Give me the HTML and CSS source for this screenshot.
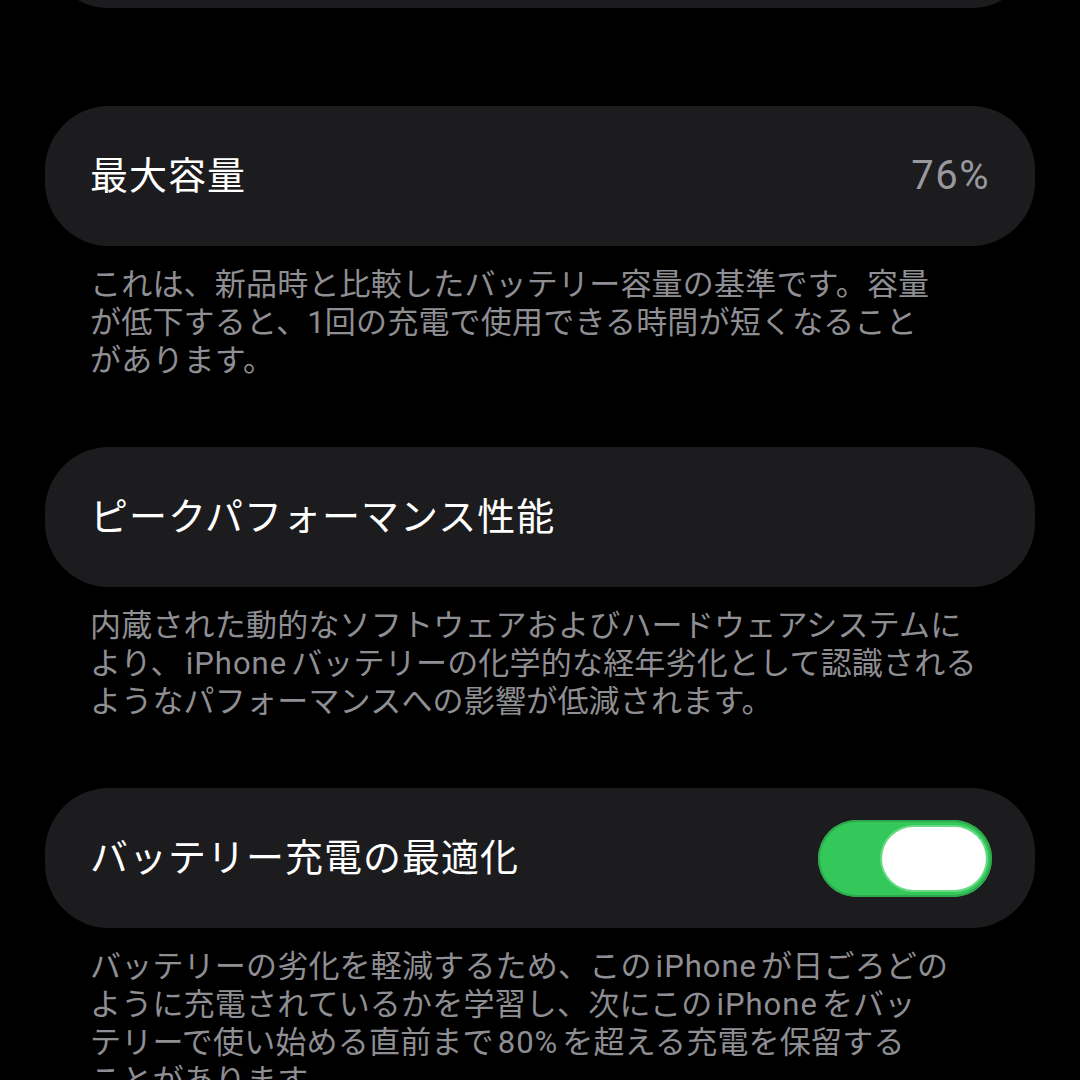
FILE: index.html
```html
<!DOCTYPE html>
<html lang="ja">
<head>
<meta charset="utf-8">
<title>バッテリーの状態</title>
<link rel="stylesheet" href="styles.css">
</head>
<body>
<main class="screen">
  <section class="card card-top"></section>

  <section class="card">
    <span class="label">最大容量</span>
    <span class="value">76%</span>
  </section>
  <p class="note">これは、新品時と比較したバッテリー容量の基準です。容量<br>が低下すると、1回の充電で使用できる時間が短くなること<br>があります。</p>

  <section class="card">
    <span class="label">ピークパフォーマンス性能</span>
  </section>
  <p class="note">内蔵された動的なソフトウェアおよびハードウェアシステムに<br>より、<span class="latin">iPhone</span>バッテリーの化学的な経年劣化として認識される<br>ようなパフォーマンスへの影響が低減されます。</p>

  <section class="card">
    <span class="label">バッテリー充電の最適化</span>
    <span class="toggle" role="switch" aria-checked="true"><span class="knob"></span></span>
  </section>
  <p class="note">バッテリーの劣化を軽減するため、この<span class="latin">iPhone</span>が日ごろどの<br>ように充電されているかを学習し、次にこの<span class="latin">iPhone</span>をバッ<br>テリーで使い始める直前まで<span class="latin">80%</span>を超える充電を保留する<br>ことがあります。</p>
</main>
</body>
</html>
```

FILE: styles.css
```css
html, body {
  margin: 0;
  padding: 0;
  background: #000;
}

body {
  width: 1080px;
  height: 1080px;
  overflow: hidden;
  font-family: Roboto, "Noto Sans CJK JP", sans-serif;
  color: #fff;
}

.screen {
  padding: 0 45px;
  display: flex;
  flex-direction: column;
}

.card {
  height: 140px;
  box-sizing: border-box;
  border-radius: 64px;
  background: #1c1c1e;
  display: flex;
  align-items: center;
  justify-content: space-between;
  padding: 0 43px 0 45px;
  flex-shrink: 0;
}

.card-top {
  margin-top: -132px;
  margin-bottom: 98px;
}

.label {
  font-size: 38px;
  line-height: 1;
  color: #fff;
  letter-spacing: 1px;
}

.value {
  font-size: 40px;
  line-height: 1;
  color: #98989e;
  letter-spacing: 1.5px;
  margin-right: 2px;
}

.note {
  margin: 20px 0 67px 45px;
  font-size: 31px;
  line-height: 38px;
  color: #8e8e93;
  white-space: nowrap;
  letter-spacing: 0.2px;
}

.latin {
  padding: 0 4px;
  letter-spacing: 1px;
}

.toggle {
  width: 174px;
  height: 77px;
  box-sizing: border-box;
  border-radius: 39px;
  background: #34c759;
  box-shadow: inset 0 0 0 2px #2ea94d;
  display: flex;
  align-items: center;
  justify-content: flex-end;
  padding: 0 6px;
}

.knob {
  width: 104px;
  height: 63px;
  border-radius: 32px;
  background: #fff;
  box-shadow: 0 0 0 2px rgba(140, 230, 160, 0.6);
}
```
